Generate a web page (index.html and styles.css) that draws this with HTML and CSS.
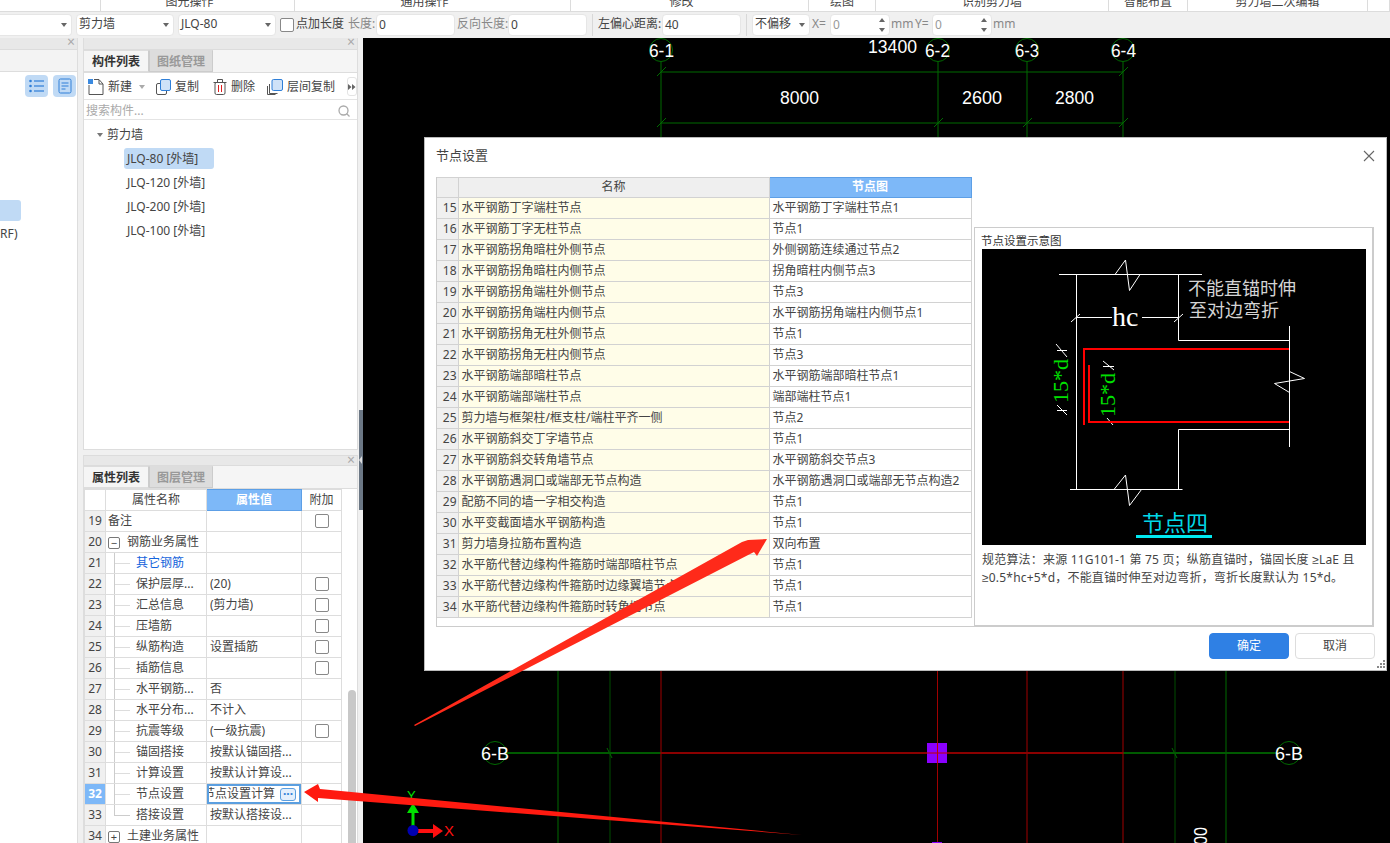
FILE: index.html
```html
<!DOCTYPE html>
<html lang="zh">
<head>
<meta charset="utf-8">
<title>节点设置</title>
<link rel="stylesheet" href="styles.css">
</head>
<body>
<div class="ribbon">
  <div class="rc"></div>
  <div class="rc off">图元操作</div>
  <div class="rc off">通用操作</div>
  <div class="rc off">修改</div>
  <div class="rc">绘图</div>
  <div class="rc">识别剪力墙</div>
  <div class="rc">智能布置</div>
  <div class="rc">剪力墙二次编辑</div>
  <div class="rc"></div>
</div>
<div class="toolbar">
  <div class="sel s0"><i class="caret"></i></div>
  <div class="sel s1"><span>剪力墙</span><i class="caret"></i></div>
  <div class="sel s1"><span>JLQ-80</span><i class="caret"></i></div>
  <span class="chk"></span><span class="lbl dark l1">点加长度</span>
  <span class="lbl l2">长度:</span><div class="inp w79">0</div>
  <span class="lbl l3">反向长度:</span><div class="inp w79">0</div>
  <span class="tsep"></span>
  <span class="lbl dark l4">左偏心距离:</span><div class="inp w79">40</div>
  <span class="tsep"></span>
  <div class="sel s2"><span>不偏移</span><i class="caret"></i></div>
  <span class="lbl l5">X=</span><div class="inp spin w60 muted">0<i class="up"></i><i class="down"></i></div>
  <span class="lbl l6">mm</span><span class="lbl l7">Y=</span><div class="inp spin w60 muted">0<i class="up"></i><i class="down"></i></div>
  <span class="lbl l6">mm</span>
</div>
<div class="main">
  <aside class="side-left">
    <div class="strip"><span class="x">×</span></div>
    <div class="ltabs"></div>
    <div class="licons">
      <span class="ibtn"><svg width="15" height="14" viewBox="0 0 15 14"><g fill="#2f7fd8"><circle cx="1.5" cy="2" r="1.3"/><circle cx="1.5" cy="7" r="1.3"/><circle cx="1.5" cy="12" r="1.3"/><rect x="5" y="1.4" width="10" height="1.2"/><rect x="5" y="6.4" width="10" height="1.2"/><rect x="5" y="11.4" width="10" height="1.2"/></g></svg></span>
      <span class="ibtn"><svg width="14" height="16" viewBox="0 0 14 16"><rect x="1" y="1" width="12" height="14" rx="1.5" fill="none" stroke="#2f7fd8"/><path d="M3.5 5h7M3.5 8h7M3.5 11h4" stroke="#2f7fd8"/></svg></span>
    </div>
    <div class="lsel"></div>
    <div class="lrf">RF)</div>
  </aside>
  <section class="side-mid">
    <div class="panel top">
      <div class="strip"><span class="x">×</span></div>
      <div class="tabs"><span class="tab on">构件列表</span><span class="tab">图纸管理</span></div>
      <div class="tools">
        <svg class="t-new" width="16" height="16" viewBox="0 0 16 16"><rect x="0" y="0" width="5" height="5" fill="#3b8ae0"/><path d="M1 6v9.5h14V5l-4-4.500H6" fill="none" stroke="#555"/><path d="M11 1v4h4" fill="none" stroke="#555"/></svg>
        <span class="tt">新建</span><i class="caret tc"></i>
        <svg class="t-ic" width="15" height="16" viewBox="0 0 15 16"><rect x="0.500" y="4.500" width="10" height="11" rx="1.500" fill="#fff" stroke="#555"/><rect x="4.500" y="0.500" width="10" height="11" rx="1.500" fill="#cfe2f8" stroke="#2f7fd8"/></svg>
        <span class="tt">复制</span>
        <svg class="t-ic t-del" width="14" height="16" viewBox="0 0 14 16"><path d="M0.500 3.500h13M4.500 3.500v-3h5v3" fill="none" stroke="#555"/><rect x="2" y="3.500" width="10" height="12" rx="1.500" fill="none" stroke="#555"/><path d="M5.500 6v7M8.500 6v7" stroke="#e02020"/></svg>
        <span class="tt">删除</span>
        <svg class="t-ic t-lay" width="16" height="16" viewBox="0 0 16 16"><path d="M2.500 5v9.500h8M0.500 7v8.500h8" fill="none" stroke="#555"/><rect x="5" y="0.500" width="10.500" height="11" rx="1.500" fill="#cfe2f8" stroke="#2f7fd8"/></svg>
        <span class="tt">层间复制</span>
        <span class="more"><svg width="8" height="6" viewBox="0 0 8 6"><path d="M0 0l3.500 3L0 6zM4 0l3.500 3L4 6z" fill="#666"/></svg></span>
      </div>
      <div class="search"><span>搜索构件...</span><svg width="12" height="12" viewBox="0 0 12 12"><circle cx="5.500" cy="5.500" r="4.500" fill="none" stroke="#aaa" stroke-width="1.300"/><path d="M8.500 8.500l3 3" stroke="#aaa" stroke-width="1.300"/></svg></div>
      <div class="tree">
        <div class="troot"><i class="caret"></i>剪力墙</div>
        <div class="titem sel-item">JLQ-80 [外墙]</div>
        <div class="titem">JLQ-120 [外墙]</div>
        <div class="titem">JLQ-200 [外墙]</div>
        <div class="titem">JLQ-100 [外墙]</div>
      </div>
    </div>
    <div class="panel bottom">
      <div class="strip"><span class="x">×</span></div>
      <div class="tabs"><span class="tab on">属性列表</span><span class="tab">图层管理</span></div>
      <div class="ptable-wrap">
        <table class="ptable">
          <colgroup><col class="c1"><col class="c2"><col class="c3"><col class="c4"></colgroup>
          <tr class="phead"><th class="blank"></th><th>属性名称</th><th class="hi">属性值</th><th>附加</th></tr>
          <tr><td class="n">19</td><td class="top-l">备注</td><td></td><td><span class="cb"></span></td></tr>
          <tr><td class="n">20</td><td class="grp"><span class="pm">−</span>钢筋业务属性</td><td></td><td></td></tr>
          <tr><td class="n">21</td><td class="ch blue">其它钢筋</td><td></td><td></td></tr>
          <tr><td class="n">22</td><td class="ch">保护层厚...</td><td class="v">(20)</td><td><span class="cb"></span></td></tr>
          <tr><td class="n">23</td><td class="ch">汇总信息</td><td class="v">(剪力墙)</td><td><span class="cb"></span></td></tr>
          <tr><td class="n">24</td><td class="ch">压墙筋</td><td></td><td><span class="cb"></span></td></tr>
          <tr><td class="n">25</td><td class="ch">纵筋构造</td><td class="v">设置插筋</td><td><span class="cb"></span></td></tr>
          <tr><td class="n">26</td><td class="ch">插筋信息</td><td></td><td><span class="cb"></span></td></tr>
          <tr><td class="n">27</td><td class="ch">水平钢筋...</td><td class="v">否</td><td></td></tr>
          <tr><td class="n">28</td><td class="ch">水平分布...</td><td class="v">不计入</td><td></td></tr>
          <tr><td class="n">29</td><td class="ch">抗震等级</td><td class="v">(一级抗震)</td><td><span class="cb"></span></td></tr>
          <tr><td class="n">30</td><td class="ch">锚固搭接</td><td class="v">按默认锚固搭...</td><td></td></tr>
          <tr><td class="n">31</td><td class="ch">计算设置</td><td class="v">按默认计算设...</td><td></td></tr>
          <tr><td class="n act">32</td><td class="ch">节点设置</td><td class="edit"><div class="editbox"><span class="edittext">节点设置计算</span><span class="dots">···</span></div></td><td></td></tr>
          <tr><td class="n">33</td><td class="ch last">搭接设置</td><td class="v">按默认搭接设...</td><td></td></tr>
          <tr><td class="n">34</td><td class="grp"><span class="pm">+</span>土建业务属性</td><td></td><td></td></tr>
        </table>
        <div class="pscroll"><div class="thumb"></div></div>
      </div>
    </div>
  </section>
  <div class="handle-col"><div class="handle"><i></i></div></div>
  <div class="canvas">
    <svg class="cad" width="1027" height="805" viewBox="363 38 1027 805">
      <g stroke="#006b00" fill="none">
        <path d="M661 62V137M938 62V137M1027 62V137M1123 62V137M661 72H1123M661 123H1123"/>
        <path d="M657 76l9-9M1119 76l9-9M657 127l9-9M934 127l9-9M1023 127l9-9M1119 127l9-9"/>
        <circle cx="661" cy="50" r="11.500"/><circle cx="938" cy="50" r="11.500"/><circle cx="1027" cy="50" r="11.500"/><circle cx="1123" cy="50" r="11.500"/>
        <circle cx="495" cy="753" r="11.500"/><circle cx="1289" cy="753" r="11.500"/>
        <path d="M558 671V843M1226 671V843"/>
        <path d="M610 671V843M1175 671V843" stroke="#004d00"/>
        <path d="M607 748l5 10M1172 748l5 10"/>
        <path d="M507 753H661M1123 753H1277" stroke="#005a00" stroke-width="2"/>
      </g>
      <g stroke="#a00000" fill="none">
        <path d="M661 671V843M937.500 671V843M1027 671V843M1123 671V843"/>
        <path d="M661 753H1123" stroke="#8b0000" stroke-width="2"/>
      </g>
      <rect x="927" y="743" width="20" height="20" fill="#8a00ff"/>
      <path d="M937.500 743V763M927 753H947" stroke="#c00000"/>
      <rect x="932" y="842" width="10" height="1" fill="#8a00ff"/>
      <g class="dim">
        <text x="868" y="53" textLength="49" lengthAdjust="spacingAndGlyphs">13400</text>
        <text x="780" y="104" textLength="39" lengthAdjust="spacingAndGlyphs">8000</text>
        <text x="962" y="104" textLength="40" lengthAdjust="spacingAndGlyphs">2600</text>
        <text x="1055" y="104" textLength="39" lengthAdjust="spacingAndGlyphs">2800</text>
        <text x="649" y="57" textLength="25" lengthAdjust="spacingAndGlyphs">6-1</text>
        <text x="925" y="57" textLength="25" lengthAdjust="spacingAndGlyphs">6-2</text>
        <text x="1015" y="57" textLength="24" lengthAdjust="spacingAndGlyphs">6-3</text>
        <text x="1111" y="57" textLength="25" lengthAdjust="spacingAndGlyphs">6-4</text>
        <text x="481" y="760" textLength="28" lengthAdjust="spacingAndGlyphs">6-B</text>
        <text x="1275" y="760" textLength="28" lengthAdjust="spacingAndGlyphs">6-B</text>
        <text transform="translate(1207 845) rotate(-90)" x="0" y="0" textLength="18" lengthAdjust="spacingAndGlyphs">00</text>
      </g>
      <g>
        <rect x="411.500" y="812" width="3" height="15" fill="#00e000"/>
        <path d="M407 813l6-10 6 10z" fill="#00e000"/>
        <text class="ay" x="407" y="800">Y</text>
        <rect x="418" y="829" width="16" height="4" fill="#ff1010"/>
        <path d="M433 824l10 7-10 7z" fill="#ff1010"/>
        <text class="ax" x="444" y="836">X</text>
        <circle cx="413" cy="830.500" r="5.500" fill="#0000b0"/>
      </g>
    </svg>
  </div>
</div>

<div class="dialog">
  <div class="dtitle"><span>节点设置</span><svg width="12" height="12" viewBox="0 0 12 12"><path d="M1 1l10 10M11 1L1 11" stroke="#666" stroke-width="1.100" fill="none"/></svg></div>
  <div class="dbody">
    <div class="dleft">
      <table class="ntable">
        <colgroup><col class="d1"><col class="d2"><col class="d3"></colgroup>
        <tr class="nhead"><th></th><th>名称</th><th class="hi">节点图</th></tr>
        <tr><td class="n">15</td><td class="nm">水平钢筋丁字端柱节点</td><td>水平钢筋丁字端柱节点1</td></tr>
        <tr><td class="n">16</td><td class="nm">水平钢筋丁字无柱节点</td><td>节点1</td></tr>
        <tr><td class="n">17</td><td class="nm">水平钢筋拐角暗柱外侧节点</td><td>外侧钢筋连续通过节点2</td></tr>
        <tr><td class="n">18</td><td class="nm">水平钢筋拐角暗柱内侧节点</td><td>拐角暗柱内侧节点3</td></tr>
        <tr><td class="n">19</td><td class="nm">水平钢筋拐角端柱外侧节点</td><td>节点3</td></tr>
        <tr><td class="n">20</td><td class="nm">水平钢筋拐角端柱内侧节点</td><td>水平钢筋拐角端柱内侧节点1</td></tr>
        <tr><td class="n">21</td><td class="nm">水平钢筋拐角无柱外侧节点</td><td>节点1</td></tr>
        <tr><td class="n">22</td><td class="nm">水平钢筋拐角无柱内侧节点</td><td>节点3</td></tr>
        <tr><td class="n">23</td><td class="nm">水平钢筋端部暗柱节点</td><td>水平钢筋端部暗柱节点1</td></tr>
        <tr><td class="n">24</td><td class="nm">水平钢筋端部端柱节点</td><td>端部端柱节点1</td></tr>
        <tr><td class="n">25</td><td class="nm">剪力墙与框架柱/框支柱/端柱平齐一侧</td><td>节点2</td></tr>
        <tr><td class="n">26</td><td class="nm">水平钢筋斜交丁字墙节点</td><td>节点1</td></tr>
        <tr><td class="n">27</td><td class="nm">水平钢筋斜交转角墙节点</td><td>水平钢筋斜交节点3</td></tr>
        <tr><td class="n">28</td><td class="nm">水平钢筋遇洞口或端部无节点构造</td><td>水平钢筋遇洞口或端部无节点构造2</td></tr>
        <tr><td class="n">29</td><td class="nm">配筋不同的墙一字相交构造</td><td>节点1</td></tr>
        <tr><td class="n">30</td><td class="nm">水平变截面墙水平钢筋构造</td><td>节点1</td></tr>
        <tr><td class="n">31</td><td class="nm">剪力墙身拉筋布置构造</td><td>双向布置</td></tr>
        <tr><td class="n">32</td><td class="nm">水平筋代替边缘构件箍筋时端部暗柱节点</td><td>节点1</td></tr>
        <tr><td class="n">33</td><td class="nm">水平筋代替边缘构件箍筋时边缘翼墙节点</td><td>节点1</td></tr>
        <tr><td class="n">34</td><td class="nm">水平筋代替边缘构件箍筋时转角墙节点</td><td>节点1</td></tr>
      </table>
    </div>
    <div class="preview">
      <div class="ptitle">节点设置示意图</div>
      <svg class="diagram" width="384" height="296" viewBox="0 0 384 296">
        <g stroke="#fff" fill="none">
          <path d="M77 25.500H220M94.500 25V240.500M196.500 25V91.500H307.500M307.500 77V198M196.500 180.500H307.500M196.500 180.500V240.500M88 240.500H200.500"/>
          <path d="M133 25.500L143.500 11 147.500 41.500 158 25.500M132 240.500L143.500 226 147.500 256.500 159.500 240.500M307.500 122.500L322.500 129.500 292.500 134.500 307.500 143.500"/>
          <path d="M94.500 68.500H130M160 68.500H196.500M89 73l9-8M192 73l9-8"/>
          <path d="M74 95l11 13M75 101.500H85M75 156l10 10M75 161.500H85M121 112l11 9M121 117.500H132M125 169l6 7M125 173.500H138"/>
        </g>
        <g stroke="#ff0000" stroke-width="2" fill="none">
          <path d="M102 176V100H307"/>
          <path d="M107 116V173H307"/>
        </g>
        <text class="hc" x="130" y="77">hc</text>
        <text class="dcn" x="206" y="46">不能直锚时伸</text>
        <text class="dcn" x="207" y="68">至对边弯折</text>
        <text class="d15" transform="translate(86 154) rotate(-90)">15*d</text>
        <text class="d15" transform="translate(133 168) rotate(-90)">15*d</text>
        <text class="dtt" x="160" y="282">节点四</text>
        <rect x="154" y="286" width="76" height="3" fill="#00e8f0"/>
      </svg>
      <p class="pnote">规范算法：来源 11G101-1 第 75 页；纵筋直锚时，锚固长度 <span class="ge">≥</span>LaE 且 <span class="ge">≥</span>0.5*hc+5*d，不能直锚时伸至对边弯折，弯折长度默认为 15*d。</p>
    </div>
  </div>
  <div class="dfoot"><button class="btn primary">确定</button><button class="btn">取消</button></div>
  <svg class="grip" width="8" height="8" viewBox="0 0 8 8"><g fill="#888"><rect x="6" y="0" width="2" height="2"/><rect x="3" y="3" width="2" height="2"/><rect x="6" y="3" width="2" height="2"/><rect x="0" y="6" width="2" height="2"/><rect x="3" y="6" width="2" height="2"/><rect x="6" y="6" width="2" height="2"/></g></svg>
</div>

<svg class="annot" width="1390" height="843" viewBox="0 0 1390 843">
  <path d="M414 725L742 542 748 540 767 539 757 556 754 552 415 726z" fill="#ff2a1a"/>
  <path d="M304 792L318 784 320 789 802 835 318 798 318 802z" fill="#ff1a10"/>
</svg>
</body>
</html>
```
FILE: styles.css
```css
* { box-sizing: border-box; }
html, body { margin: 0; padding: 0; }
body {
  width: 1390px; height: 843px; overflow: hidden; position: relative;
  display: flex; flex-direction: column; background: #f0f0f0;
  font: 12px/1.2 "Noto Sans", "Noto Sans CJK SC", sans-serif; color: #333;
}
table { border-collapse: collapse; table-layout: fixed; font-size: 12px; }

.ribbon {
  height: 12px; flex: none; background: #fff; border-bottom: 1px solid #dcdcdc; overflow: hidden;
  display: grid; grid-template-columns: 101px 194px 276px 238px 67px 233px 79px 180px 22px;
}
.rc { border-right: 1px solid #dcdcdc; text-align: center; line-height: 4px; color: #444; white-space: nowrap; overflow: hidden; }
.rc.off { padding-right: 16px; }

.toolbar { height: 26px; flex: none; background: #f0f0f0; display: flex; align-items: center; padding-bottom: 1px; }
.sel { height: 22px; background: #fff; border: 1px solid #e6e6e6; border-radius: 4px; display: flex; align-items: center; justify-content: space-between; padding: 0 4px 0 2px; margin-right: 4px; color: #444; }
.s0 { width: 72px; justify-content: flex-end; border-left: 0; border-radius: 0 4px 4px 0; }
.s1 { width: 98px; }
.s2 { width: 58px; margin: 0 2px 0 5px; }
.caret { width: 0; height: 0; border: 3px solid transparent; border-top: 4px solid #666; border-bottom: 0; display: inline-block; }
.chk { width: 14px; height: 14px; background: #fff; border: 1px solid #888; border-radius: 2px; flex: none; }
.lbl { color: #888; white-space: nowrap; flex: none; }
.lbl.dark { color: #444; }
.l1 { margin-left: 2px; width: 52px; }
.l2 { width: 28px; }
.l3 { width: 51px; margin-left: 2px; }
.l4 { width: 64px; margin-left: 5px; }
.l5 { width: 18px; }
.l6 { width: 24px; margin-left: 1px; }
.l7 { width: 17px; }
.inp { height: 22px; background: #fff; border: 1px solid #e6e6e6; border-radius: 4px; padding: 3px 2px; color: #444; position: relative; flex: none; }
.inp.muted { color: #999; }
.w79 { width: 79px; } .w60 { width: 60px; }
.spin .up, .spin .down { position: absolute; right: 4px; width: 0; height: 0; border: 3px solid transparent; }
.spin .up { top: 3px; border-bottom: 4px solid #666; border-top: 0; }
.spin .down { bottom: 3px; border-top: 4px solid #666; border-bottom: 0; }
.tsep { width: 1px; height: 22px; background: #d8d8d8; margin-left: 5px; flex: none; }

.main { flex: 1; display: flex; min-height: 0; }
.side-left { width: 78px; flex: none; background: #fff; border-right: 1px solid #ddd; }
.strip { height: 12px; background: #e8e8e8; border-bottom: 1px solid #dcdcdc; position: relative; }
.x { position: absolute; right: 2px; top: -3px; font-size: 14px; line-height: 14px; color: #aaa; }
.ltabs { height: 22px; background: #f3f3f3; border-bottom: 1px solid #ddd; }
.licons { height: 26px; padding-top: 3px; display: flex; justify-content: flex-end; gap: 5px; padding-right: 1px; }
.ibtn { width: 23px; height: 22px; background: #c0daf5; border-radius: 4px; display: flex; align-items: center; justify-content: center; }
.lsel { width: 21px; height: 21px; margin-top: 102px; background: #c0daf5; border-radius: 0 3px 3px 0; }
.lrf { margin-top: 6px; color: #444; }

.side-mid { width: 275px; flex: none; margin-left: 5px; display: flex; flex-direction: column; background: #f0f0f0; }
.panel { background: #fff; border-left: 1px solid #ddd; border-right: 1px solid #ddd; }
.panel.top { height: 412px; border-bottom: 1px solid #ddd; }
.panel.bottom { flex: 1; margin-top: 5px; min-height: 0; overflow: hidden; }
.panel.bottom .strip { height: 11px; border-top: 1px solid #dcdcdc; }
.tabs { height: 23px; background: #f5f5f5; display: flex; border-bottom: 1px solid #ddd; }
.tab { width: 64px; height: 22px; background: #ddd; border: 1px solid #ccc; border-top: 1px solid #ddd; color: #999; font-weight: 700; text-align: center; line-height: 21px; }
.tab.on { background: #f5f5f5; color: #333; border-color: #ddd; border-left: 0; border-right: 1px solid #ccc; width: 65px; }
.tools { height: 27px; display: flex; align-items: center; padding: 2px 0 0 4px; border-bottom: 1px solid #e4e4e4; position: relative; }
.tt { margin-left: 4px; color: #444; white-space: nowrap; }
.tc { margin-left: 7px; border-top-color: #aaa; }
.t-ic { margin-left: 11px; }
.t-del { margin-left: 14px; }
.t-lay { margin-left: 12px; }
.more { position: absolute; left: 263px; top: 4px; width: 10px; height: 19px; border: 1px solid #e4e4e4; border-radius: 3px; background: #fff; display: flex; align-items: center; justify-content: center; }
.search { height: 20px; display: flex; align-items: center; justify-content: space-between; padding: 3px 7px 0 2px; color: #aaa; border-bottom: 1px solid #e4e4e4; }
.tree { padding-top: 5px; }
.troot { height: 20px; line-height: 20px; padding-left: 13px; color: #444; display: flex; align-items: center; gap: 4px; }
.troot .caret { border-top-color: #777; }
.titem { width: 90px; height: 21px; line-height: 22px; margin: 3px 0 3px 40px; padding-left: 3px; color: #444; border-radius: 3px; white-space: nowrap; }
.titem.sel-item { background: #c0daf5; }

.ptable-wrap { display: flex; height: 354px; }
.ptable { width: 257px; height: max-content; flex: none; }
.c1 { width: 21px; } .c2 { width: 101px; } .c3 { width: 95px; } .c4 { width: 40px; }
.ptable td, .ptable th { height: 21px; padding: 0; border: 1px solid #ddd; color: #444; font-weight: 400; white-space: nowrap; overflow: hidden; }
.phead th { text-align: center; }
.ptable th.blank { background: #fff; }
th.hi { background: #7db8f8 !important; color: #fff !important; font-weight: 700 !important; border: 1px solid #5d9fe6 !important; }
.ptable .n { background: #f0f0f0; text-align: center; }
.ptable .n.act { background: #7db8f8; color: #fff; font-weight: 700; }
.top-l { padding-left: 2px !important; }
.grp { padding-left: 2px !important; }
.pm { display: inline-block; width: 12px; height: 12px; border: 1px solid #777; border-radius: 2px; line-height: 9px; text-align: center; margin-right: 7px; vertical-align: -1px; font-size: 11px; }
.ptable td.ch { padding-left: 30px; position: relative; background: linear-gradient(#ccc, #ccc) 8px 0 / 1px 100% no-repeat, linear-gradient(#ddd, #ddd) 8px 10px / 16px 1px no-repeat; }
.ptable td.ch.last { background: linear-gradient(#ccc, #ccc) 8px 0 / 1px 11px no-repeat, linear-gradient(#ccc, #ccc) 8px 10px / 16px 1px no-repeat; }
.ptable td.blue { color: #1464dc; }
.ptable td.v { padding-left: 3px; }
.ptable td:last-child { text-align: center; }
.cb { display: inline-block; width: 14px; height: 14px; border: 1px solid #888; border-radius: 2px; vertical-align: middle; }
.ptable td.edit { padding: 0; }
.editbox { height: 20px; border: 2px solid #5b9fe0; display: flex; align-items: center; justify-content: flex-end; overflow: hidden; padding-right: 3px; gap: 5px; }
.edittext { flex: none; }
.dots { flex: none; width: 16px; height: 13px; border: 1px solid #5b9fe0; border-radius: 3px; background: #e3effc; color: #2f7fd8; font-weight: 700; line-height: 9px; text-align: center; font-size: 12px; }
.pscroll { width: 15px; flex: none; position: relative; margin-left: 1px; }
.thumb { position: absolute; left: 5px; right: 2px; top: 201px; bottom: 0; background: #c8c8c8; border-radius: 4px 4px 0 0; }

.handle-col { width: 5px; flex: none; padding-top: 372px; background: #f0f0f0; }
.handle { width: 4px; height: 100px; margin-left: 1px; background: #6b7785; position: relative; }
.handle i { position: absolute; left: 0; top: 46px; width: 0; height: 0; border: 4px solid transparent; border-right: 3px solid #ddd; border-left: 0; }

.canvas { flex: 1; background: #000; overflow: hidden; min-width: 0; }
.cad { display: block; }
.dim text { fill: #fff; font: 18px "Liberation Sans", sans-serif; }
.ay { fill: #00e000; font: 13px "Liberation Sans", sans-serif; }
.ax { fill: #ff1010; font: 15px "Liberation Sans", sans-serif; }

.dialog { position: absolute; left: 424px; top: 137px; width: 963px; height: 534px; background: #fff; border: 1px solid #bbb; padding: 0 11px; display: flex; flex-direction: column; }
.dtitle { height: 39px; flex: none; display: flex; align-items: center; justify-content: space-between; font-size: 13px; color: #444; padding-bottom: 4px; }
.dtitle svg { margin-right: 0; }
.dbody { height: 450px; display: flex; flex: none; width: 939px; }
.dleft { width: 538px; flex: none; border-left: 1px solid #ccc; border-bottom: 1px solid #ccc; }
.ntable { width: 534px; }
.d1 { width: 21px; } .d2 { width: 311px; } .d3 { width: 202px; }
.ntable th, .ntable td { height: 21px; padding: 0 3px; border: 1px solid #d2d2d2; color: #444; font-weight: 400; white-space: nowrap; overflow: hidden; }
.ntable tr:first-child th { border-left: 0; }
.ntable td:first-child { border-left: 0; }
.nhead th { height: 20px; background: #efefef; text-align: center; }
.ntable .n { background: #f0f0f0; padding: 0 1px 0 0; text-align: right; font-size: 12px; }
.ntable .nm { background: #fffde8; }
.preview { width: 400px; flex: none; margin-top: 50px; height: 400px; border: 1px solid #ccc; border-width: 1px 2px 2px 1px; padding-left: 7px; background: #fff; }
.ptitle { height: 21px; line-height: 25px; font-size: 11.500px; color: #333; margin-left: -1px; }
.diagram { display: block; background: #000; }
.hc { fill: #fff; font: 28px "Liberation Serif", serif; }
.dcn { fill: #d4d4d4; font: 18px "Noto Sans CJK SC", sans-serif; }
.d15 { fill: #00e000; font: 22px "Liberation Serif", serif; }
.dtt { fill: #00d8e8; font: 22px "Noto Sans CJK SC", sans-serif; }
.pnote { margin: 6px 7px 0 0; font-size: 12px; letter-spacing: 0.2px; line-height: 17px; color: #444; }
.ge { font-family: "Liberation Sans", sans-serif; }
.dfoot { display: flex; justify-content: flex-end; gap: 6px; padding-top: 6px; }
.btn { width: 80px; height: 26px; border: 1px solid #ddd; border-radius: 4px; background: #fff; color: #444; font: inherit; padding: 0; }
.btn.primary { background: #2f80e4; border-color: #2f80e4; color: #fff; }
.grip { position: absolute; right: 1px; bottom: 2px; }

.annot { position: absolute; left: 0; top: 0; pointer-events: none; }
```
